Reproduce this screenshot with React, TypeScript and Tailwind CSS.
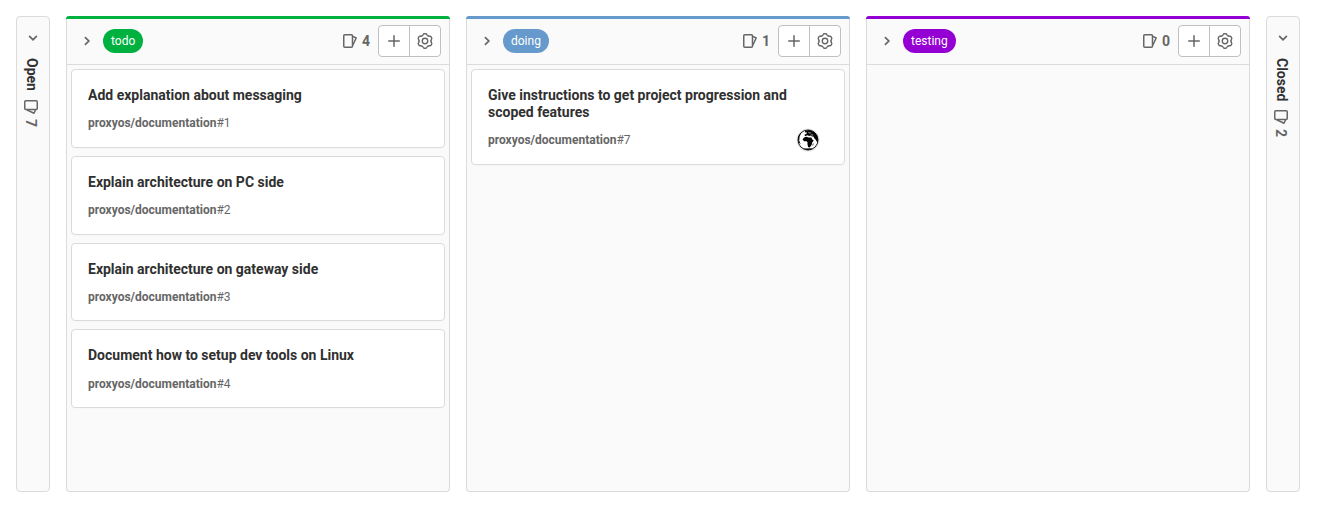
import React from "react";

type Issue = { id: number; title: string; avatar?: boolean };

function Chevron({ className = "" }: { className?: string }) {
  return (
    <svg viewBox="0 0 16 16" className={`size-4 shrink-0 ${className}`} fill="none" stroke="#666666" strokeWidth="1.75">
      <path d="M6.4 4.6 9.8 8 6.4 11.4" strokeLinecap="round" />
    </svg>
  );
}

function IssuesIcon({ className = "" }: { className?: string }) {
  return (
    <svg viewBox="0 0 16 16" className={`size-4 shrink-0 ${className}`} fill="none" stroke="#666666" strokeWidth="1.5" strokeLinejoin="round" strokeLinecap="round">
      <rect x="1.75" y="1.75" width="8.75" height="12.5" rx="1" />
      <path d="M10.8 3.4 14.2 5 11 11.8" />
    </svg>
  );
}

function GearIcon() {
  return (
    <svg viewBox="-8 -8 16 16" className="size-4" fill="none" stroke="#666666" strokeWidth="1.4" strokeLinejoin="round" strokeLinecap="round">
      <circle r="2.75" />
      {[0, 60, 120, 180, 240, 300].map((a) => (
        <path key={a} transform={`rotate(${a})`} d="M-3-5.2C-2.3-5.5-2-5.8-1.8-6.4Q-1.5-7.3-.8-7.3H.8Q1.5-7.3 1.8-6.4C2-5.8 2.3-5.5 3-5.2" />
      ))}
    </svg>
  );
}

function Globe() {
  return (
    <svg viewBox="0 0 24 24" className="size-6">
      <circle cx="12" cy="12" r="11.5" fill="#e5e5e5" />
      <circle cx="12" cy="12" r="10" fill="#fff" stroke="#050505" strokeWidth=".9" />
      <path fill="#050505" d="M9 3 13 2 18 3.7 21.2 7.5 22 11 21.6 14.5 20.4 13 19.2 11 18.2 10.5 17.7 8.7 15.5 8.2 14.5 7.4 13.2 7.9 11.2 7.2 9.1 8.2 8.4 6.8 10.2 6 11.2 4.5 9.2 4.4Z" />
      <path fill="#050505" d="M8 9.5 10.5 8.7 12.5 9.5 15.3 9.6 16.5 11.8 17.8 12.4 16.2 14.6 15.6 17 13.7 19.4 12.1 18.9 11.4 16 11.6 14.4 10.6 13.3 8 13.3 6.6 11.5ZM16.8 15.8 17.5 15 17.2 17.4 16.4 17.4ZM1.9 9.5 3.7 6 5.4 4.4 3.6 8.4 3.2 12.4 4.6 16.3 2.6 14.6ZM6.5 19.8 10 20.6 16.5 20.3 14.5 21.7 11 22Z" />
      <path stroke="#fff" strokeWidth=".6" fill="none" d="m12.3 4.6 1.8.5 1.1-.4M15 6.7l2.2.5" />
    </svg>
  );
}

function Card({ issue }: { issue: Issue }) {
  return (
    <li className="h-[78.8px] rounded border border-[#dbdbdb] bg-white px-4 pt-[17px] shadow-[0_1px_2px_rgba(0,0,0,0.02)] has-[svg]:h-[95.6px]">
      <h4 className="text-[14px] leading-[16.8px] font-bold text-[#303030]">{issue.title}</h4>
      <div className="mt-[10.4px] flex h-[18px] items-center text-[12px] leading-[18px] text-[#666666]">
        <span className="font-bold">proxyos/documentation</span>
        <span>#{issue.id}</span>
        {issue.avatar && (
          <span className="mr-2 ml-auto">
            <Globe />
          </span>
        )}
      </div>
    </li>
  );
}

type ColumnProps = { label: string; top: string; pill: string; issues: Issue[] };

function Column({ label, top, pill, issues }: ColumnProps) {
  return (
    <section className="flex w-96 shrink-0 flex-col rounded border border-t-0 border-[#dbdbdb] bg-[#fafafa]">
      <div className={`-mx-px h-[3px] shrink-0 rounded-t ${top}`} />
      <header className="flex h-[46px] shrink-0 items-center border-b border-[#dbdbdb] pr-2 pb-px pl-3">
        <Chevron />
        <span className={`ml-2 flex h-6 items-center rounded-full px-2 text-[12px] leading-4 text-white ${pill}`}>{label}</span>
        <IssuesIcon className="ml-auto" />
        <span className="mr-2 ml-1 text-[14px] leading-5 font-bold text-[#666666]">{issues.length}</span>
        <div className="flex h-8 w-[63px] overflow-hidden rounded border border-[#bfbfbf] bg-white">
          <button className="flex flex-1 items-center justify-center" aria-label="New issue">
            <svg viewBox="0 0 16 16" className="size-4" stroke="#666666" strokeWidth="1.5" strokeLinecap="round">
              <path d="M8 2.75v10.5M2.75 8h10.5" />
            </svg>
          </button>
          <button className="flex flex-1 items-center justify-center border-l border-[#bfbfbf]" aria-label="List settings">
            <GearIcon />
          </button>
        </div>
      </header>
      <ul className="flex flex-col gap-2 p-1">
        {issues.map((i) => (
          <Card key={i.id} issue={i} />
        ))}
      </ul>
    </section>
  );
}

function Collapsed({ label, count }: { label: string; count: number }) {
  return (
    <section className="flex w-[34px] shrink-0 flex-col items-center rounded border border-[#dbdbdb] bg-[#fafafa] pt-[13px]">
      <Chevron className="rotate-90" />
      <div className="mt-3 mr-[3px] text-[14px] leading-5 font-bold text-[#303030] [writing-mode:vertical-rl]">{label}</div>
      <IssuesIcon className="mt-2 mr-1 rotate-90" />
      <div className="mt-1 mr-[5px] text-[14px] leading-5 font-bold text-[#666666] [writing-mode:vertical-rl]">{count}</div>
    </section>
  );
}

const todo: Issue[] = [
  { id: 1, title: "Add explanation about messaging" },
  { id: 2, title: "Explain architecture on PC side" },
  { id: 3, title: "Explain architecture on gateway side" },
  { id: 4, title: "Document how to setup dev tools on Linux" },
];
const doing: Issue[] = [{ id: 7, title: "Give instructions to get project progression and scoped features", avatar: true }];

export default function App() {
  return (
    <main className="flex h-[507px] gap-4 overflow-hidden bg-white px-4 pt-4 pb-[15px] font-[Roboto,sans-serif]">
      <Collapsed label="Open" count={7} />
      <Column label="todo" top="bg-[#00b140]" pill="bg-[#00b140]" issues={todo} />
      <Column label="doing" top="bg-[#6699cc]" pill="bg-[#6699cc]" issues={doing} />
      <Column label="testing" top="bg-[#9400d3]" pill="bg-[#9400d3]" issues={[]} />
      <Collapsed label="Closed" count={2} />
    </main>
  );
}
